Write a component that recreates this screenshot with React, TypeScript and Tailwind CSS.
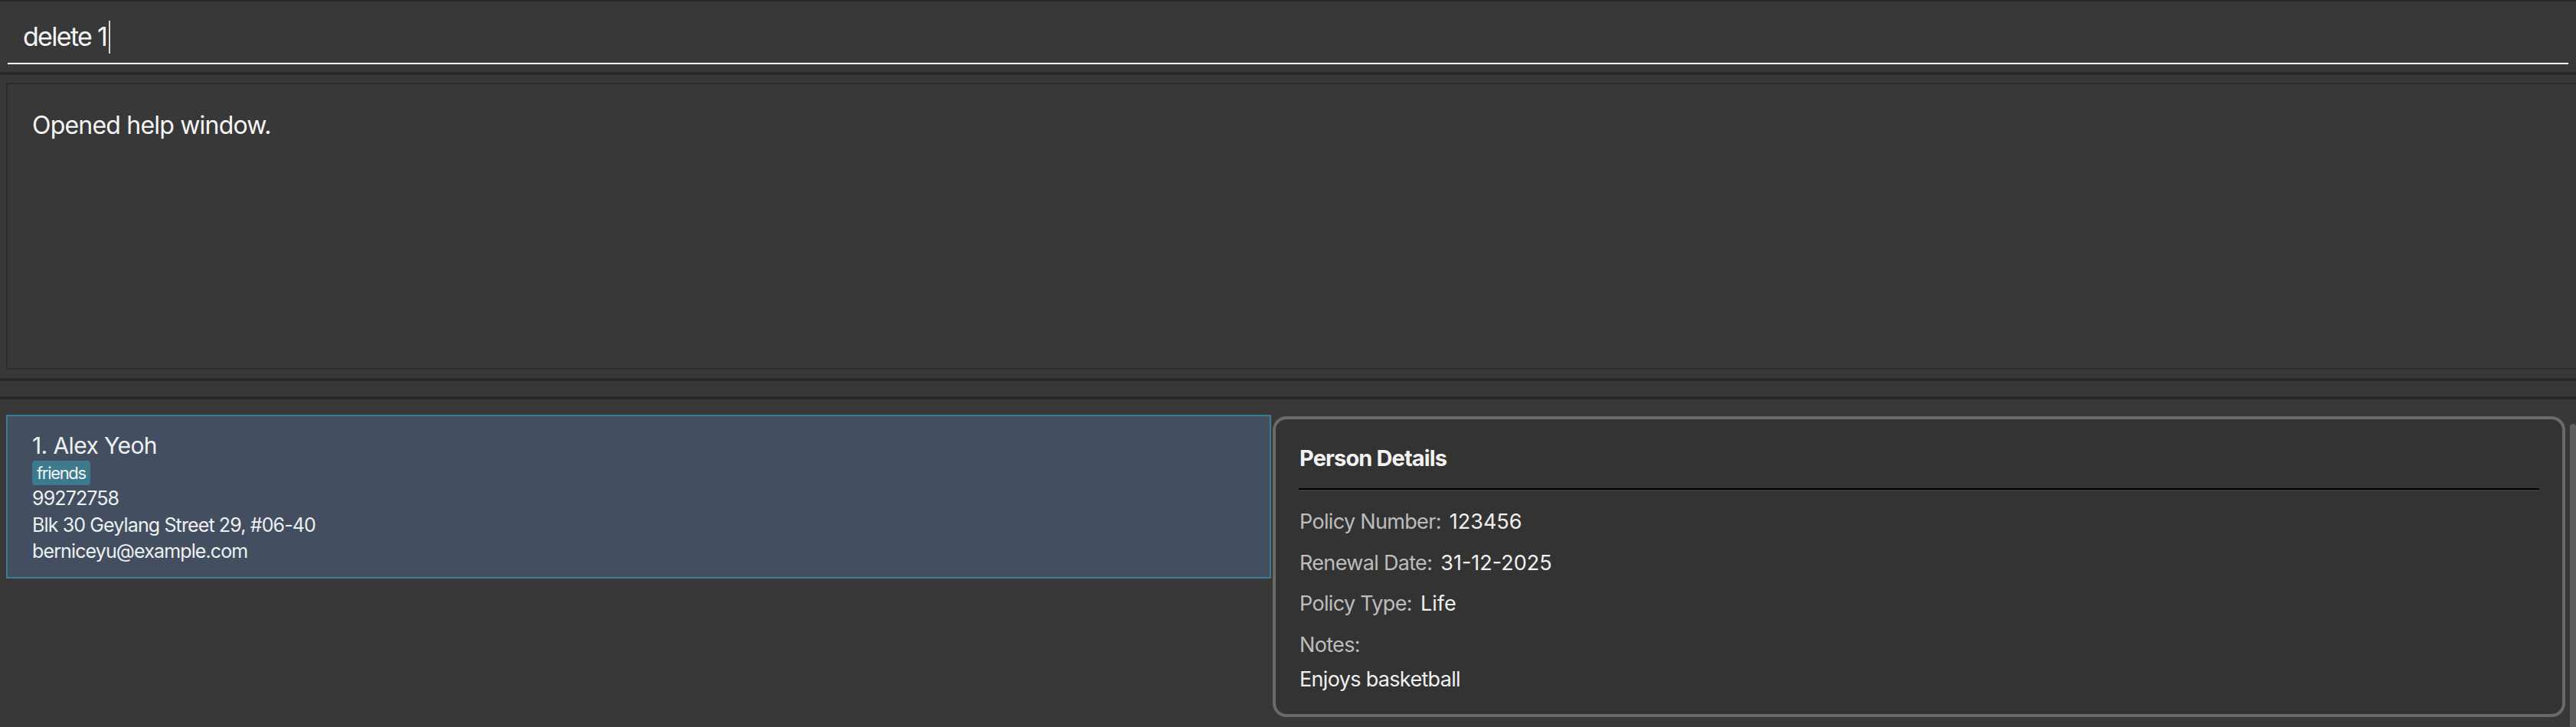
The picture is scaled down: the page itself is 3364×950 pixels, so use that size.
import React from "react";

const font = "font-['Inter','Noto_Sans',sans-serif]";

function DetailRow({ label, value }: { label: string; value: string }) {
  return (
    <div className="flex h-[34px] items-baseline leading-[34px] text-[27px]">
      <span className="tracking-[-0.025em] text-[#bdbdbd]">{label}</span>
      <span className="ml-[11px] tracking-[0em] text-[#f0f0f0]">{value}</span>
    </div>
  );
}

export default function App() {
  return (
    <div className={`${font} h-[950px] w-[3364px] overflow-hidden bg-[#383838] text-white`}>
      <div className="h-[2px] bg-[#2a2a2a]" />
      {/* Command box */}
      <div className="h-[92px] px-[10px]">
        <div className="h-[82px] border-b-2 border-white pl-[20px] pt-[24px]">
          <div className="flex h-[44px] items-center text-[34px] leading-[44px] tracking-[-0.05em] text-[#f4f4f4]">
            <span>delete 1</span>
            <span className="ml-[3px] inline-block h-[43px] w-[2px] bg-[#d8d8d8]" />
          </div>
        </div>
      </div>
      <div className="h-[4px] bg-[#2a2a2a]" />
      <div className="h-[10px]" />
      {/* Result display */}
      <div className="ml-[8px] h-[375px] border-2 border-r-0 border-[#2c2c2c] pl-[32px] pt-[34px]">
        <div className="text-[32px] leading-[40px] tracking-[-0.025em] text-[#f6f6f6]">Opened help window.</div>
      </div>
      <div className="h-[11px]" />
      <div className="h-[4px] bg-[#2a2a2a]" />
      <div className="h-[20px]" />
      <div className="h-[4px] bg-[#2a2a2a]" />
      <div className="h-[20px]" />
      {/* Main row */}
      <div className="flex h-[408px] pl-[8px]">
        <div className="flex h-[214px] w-[1652px] flex-col border-2 border-[#3a7d93] bg-[#434f60] pl-[32px] pt-[20px] text-[#eef0f2]">
          <div className="h-[36px] text-[30px] leading-[36px] tracking-[-0.02em]">1. Alex Yeoh</div>
          <div className="mt-[2px] flex">
            <span className="h-[32px] rounded-[4px] bg-[#3d7a8d] px-[6px] text-[22px] leading-[32px] tracking-[-0.06em] text-[#eef4f6]">
              friends
            </span>
          </div>
          <div className="text-[25px] leading-[34.5px] tracking-[-0.035em]">
            <div>99272758</div>
            <div>Blk 30 Geylang Street 29, #06-40</div>
            <div>berniceyu@example.com</div>
          </div>
        </div>
        <div className="ml-[2px] mt-[2px] h-[393px] w-[1688px] rounded-[18px] border-4 border-[#6a6a6a] bg-[#333333] px-[30px] pt-[34px]">
          <div className="h-[34px] pl-[1px] text-[29px] font-bold leading-[34px] tracking-[-0.03em] text-[#f2f2f2]">Person Details</div>
          <div className="mt-[22px] border-t-2 border-b-2 border-t-black border-b-[#3e3e3e]" />
          <div className="mt-[23px] flex flex-col gap-[19.5px] pl-[1px]">
            <DetailRow label="Policy Number:" value="123456" />
            <DetailRow label="Renewal Date:" value="31-12-2025" />
            <DetailRow label="Policy Type:" value="Life" />
          </div>
          <div className="mt-[19.5px] h-[34px] pl-[1px] text-[27px] leading-[34px] tracking-[-0.025em] text-[#bdbdbd]">Notes:</div>
          <div className="mt-[11px] h-[34px] pl-[1px] text-[27px] leading-[34px] tracking-[-0.025em] text-[#f0f0f0]">Enjoys basketball</div>
        </div>
        <div className="ml-[6px] mt-[12px] w-[8px] flex-1 rounded-t-[4px] bg-[#5f5f5f]" />
      </div>
    </div>
  );
}
